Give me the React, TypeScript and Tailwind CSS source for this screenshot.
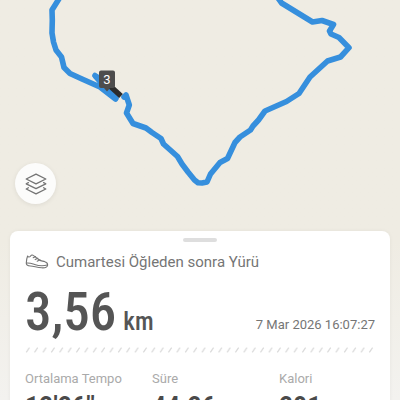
interface Stat {
  label: string;
  value: string;
}

const stats: Stat[] = [
  { label: "Ortalama Tempo", value: "12'26\"" },
  { label: "Süre", value: "44:26" },
  { label: "Kalori", value: "281" },
];

const LayersIcon = () => (
  <svg viewBox="0 0 22 22" className="h-[22px] w-[22px]" fill="none" stroke="#747474" strokeWidth="1.3" strokeLinejoin="round" strokeLinecap="round">
    <path d="M11 1.2 20.8 6 11 10.8 1.2 6Z" />
    <path d="M3.4 9.6 1.2 10.8 11 15.6 20.8 10.8 18.6 9.6" />
    <path d="M3.4 14.8 1.2 16 11 20.8 20.8 16 18.6 14.8" />
  </svg>
);

const ShoeIcon = () => (
  <svg viewBox="0 0 24 16" className="h-4 w-6" fill="none" stroke="#757575" strokeWidth="1.1" strokeLinejoin="round" strokeLinecap="round">
    <path d="M2.6 2C3.2 3.4 5 3.2 5.8 1.8 6.4 .8 7.6 .8 8.6 1.6L14.4 6C16 7.2 18 7 20 7.8 22 8.5 22.8 9.6 22.6 11.2 22.4 13.2 20 14 16.6 13.8 12.4 13.6 9 12.3 5.4 12 2.6 11.800 1.2 11.200 1.3 9 1.4 6.600 1.8 4 2.6 2Z" />
    <path d="M1.4 9C5 8.8 7 9.6 9.6 10.5 13.6 11.9 18.4 12.2 22.4 11" />
    <path d="M8.2 3.8 10.6 2.6M10.2 5.6 12.8 4.2M12.2 7.2 15 5.8" />
  </svg>
);

const RouteMap = () => (
  <svg viewBox="0 0 400 230" className="block w-full" fill="none">
    <g stroke="#368fdd" strokeWidth="5.6" strokeLinejoin="round" strokeLinecap="round">
      <path d="M59.5-2 52 10 52.3 20 52 33 53.5 42 56 50 61.5 57 64 67.5 70 73.5 82 79 100 87 115.5 99 112 95 96 77" />
      <path d="M95 75.5 108 84 116 98" />
      <path d="M124 97 126 95 129.3 105 126.5 113 133 123.5 146 128 152 132.5 161 138.5 163.5 144 177.5 156.5 182 164 188 172 194.5 180 198 182.7 202 183 207 182 210.5 174 220 162.5 227.5 158.5 235 142.5 240 137 250.5 130 253 126 258.5 120 265 111 286.5 101.5 299 93.5 310 77 327.5 61 340.5 57 349 47.7 339 37.5 331 34 329.5 31 333.5 24.5 322 20.5 312.5 22 281.5 3 278-2" />
    </g>
    <path d="M110 86 121 96" stroke="#2c2c2c" strokeWidth="5.4" />
    <path d="M101 70.5H113A2 2 0 0 1 115 72.5V86A2 2 0 0 1 113 88H110L107 91.5 104 88H101A2 2 0 0 1 99 86V72.5A2 2 0 0 1 101 70.5Z" fill="#4d4d4d" />
    <text x="107" y="84" textAnchor="middle" fontSize="13" fill="#fff">3</text>
  </svg>
);

const HatchDivider = () => (
  <svg className="mt-2 block h-[6px] w-full" aria-hidden="true">
    <defs>
      <pattern id="hatch" width="8.37" height="6" patternUnits="userSpaceOnUse">
        <path d="M1.2 5.3 4.4 .7" stroke="#d9d9d9" strokeWidth="1.2" />
      </pattern>
    </defs>
    <rect width="100%" height="6" fill="url(#hatch)" />
  </svg>
);

export default function App() {
  return (
    <main className="h-screen overflow-hidden bg-linear-to-b from-[#efece3] from-60% to-[#f3f2ef] font-['Roboto',sans-serif]">
      <section className="relative pb-px">
        <RouteMap />
        <button
          type="button"
          aria-label="Harita katmanları"
          className="absolute bottom-[27px] left-[15px] flex h-[41px] w-[41px] items-center justify-center rounded-full bg-[#fcfcfb] shadow-[0_1px_5px_rgba(0,0,0,0.08)]"
        >
          <LayersIcon />
        </button>
      </section>

      <section className="mx-[10px] rounded-t-lg bg-white px-[15px] pb-6 shadow-[0_0_4px_rgba(0,0,0,0.05)]">
        <div className="flex justify-center pt-[7px]">
          <div className="h-1 w-[34px] rounded-full bg-[#dedede]" />
        </div>

        <div className="mt-2 flex items-center gap-[7px]">
          <ShoeIcon />
          <h1 className="text-[15px] leading-6 text-[#757575]">Cumartesi Öğleden sonra Yürü</h1>
        </div>

        <div className="mt-[11px] flex items-end justify-between">
          <p className="flex items-baseline gap-[7px] font-['Roboto_Condensed','Roboto',sans-serif] font-medium text-[#555]">
            <span className="text-[53px] leading-[54px]">3,56</span>
            <span className="text-[25px] leading-8">km</span>
          </p>
          <time className="pb-1 text-[13px] leading-5 text-[#757575]">7 Mar 2026 16:07:27</time>
        </div>

        <HatchDivider />

        <dl className="mt-4 grid grid-cols-[127px_127px_1fr]">
          {stats.map((stat) => (
            <div key={stat.label}>
              <dt className="text-[13px] leading-5 text-[#aaa]">{stat.label}</dt>
              <dd className="mt-0.5 font-['Roboto_Condensed','Roboto',sans-serif] text-[28px] leading-8 font-semibold text-[#4a4a4a]">
                {stat.value}
              </dd>
            </div>
          ))}
        </dl>
      </section>
    </main>
  );
}
